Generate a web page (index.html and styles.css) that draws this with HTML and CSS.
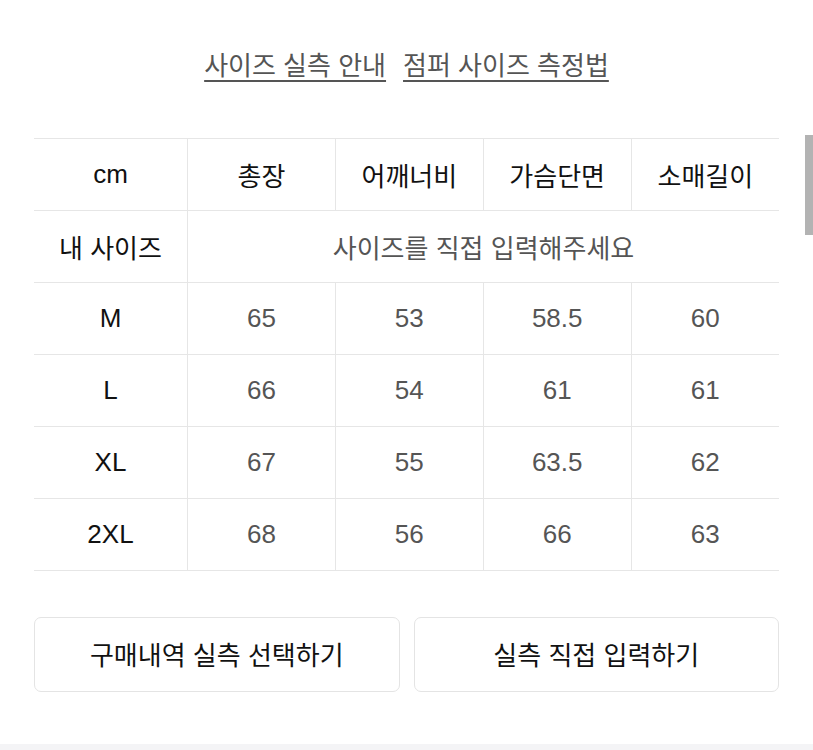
FILE: index.html
```
<!DOCTYPE html>
<html lang="ko">
<head>
<meta charset="utf-8">
<link rel="stylesheet" href="styles.css">
</head>
<body>
<div class="page">
  <nav class="links">
    <a class="link">사이즈 실측 안내</a>
    <a class="link">점퍼 사이즈 측정법</a>
  </nav>
  <table class="size-table">
    <tr class="head">
      <th>cm</th><th>총장</th><th>어깨너비</th><th>가슴단면</th><th>소매길이</th>
    </tr>
    <tr>
      <th>내 사이즈</th><td colspan="4">사이즈를 직접 입력해주세요</td>
    </tr>
    <tr><th>M</th><td>65</td><td>53</td><td>58.5</td><td>60</td></tr>
    <tr><th>L</th><td>66</td><td>54</td><td>61</td><td>61</td></tr>
    <tr><th>XL</th><td>67</td><td>55</td><td>63.5</td><td>62</td></tr>
    <tr><th>2XL</th><td>68</td><td>56</td><td>66</td><td>63</td></tr>
  </table>
  <div class="buttons">
    <button class="btn">구매내역 실측 선택하기</button>
    <button class="btn">실측 직접 입력하기</button>
  </div>
</div>
<div class="footer-band"></div>
<div class="scrollbar"></div>
</body>
</html>
```
FILE: styles.css
```
html, body {
  margin: 0;
  padding: 0;
  background: #fff;
  font-family: "Liberation Sans", "Noto Sans CJK KR", sans-serif;
}
.page {
  padding: 0 34px 0 34px;
  height: 744px;
  box-sizing: border-box;
}
.links {
  display: flex;
  justify-content: center;
  gap: 17px;
  padding-top: 48px;
  height: 90px;
  box-sizing: border-box;
}
.link {
  font-size: 26px;
  line-height: 36px;
  color: #555;
  text-decoration: underline;
  text-underline-offset: 5px;
  text-decoration-thickness: 2px;
}
.size-table {
  width: 745px;
  border-collapse: collapse;
  table-layout: fixed;
  margin-top: 48px;
}
.size-table tr {
  height: 72px;
  border-top: 1px solid #e6e6e6;
  border-bottom: 1px solid #e6e6e6;
}
.size-table th, .size-table td {
  font-size: 26px;
  text-align: center;
  vertical-align: middle;
  padding: 0 0 1px 0;
  border-left: 1px solid #e6e6e6;
  font-weight: 400;
}
.size-table th {
  color: #111;
}
.size-table td {
  color: #555;
}
.size-table tr > :first-child {
  border-left: none;
  width: 153px;
}
.buttons {
  display: flex;
  gap: 14px;
  margin-top: 46px;
}
.btn {
  flex: 1;
  height: 75px;
  background: #fff;
  border: 1px solid #e4e4e4;
  border-radius: 7px;
  font-family: "Liberation Sans", "Noto Sans CJK KR", sans-serif;
  font-size: 26px;
  color: #111;
  padding: 0 0 3px 0;
}
.footer-band {
  height: 6px;
  background: #f4f4f6;
}
.scrollbar {
  position: absolute;
  left: 805px;
  top: 135px;
  width: 8px;
  height: 100px;
  background: #b3b3b3;
}
```
